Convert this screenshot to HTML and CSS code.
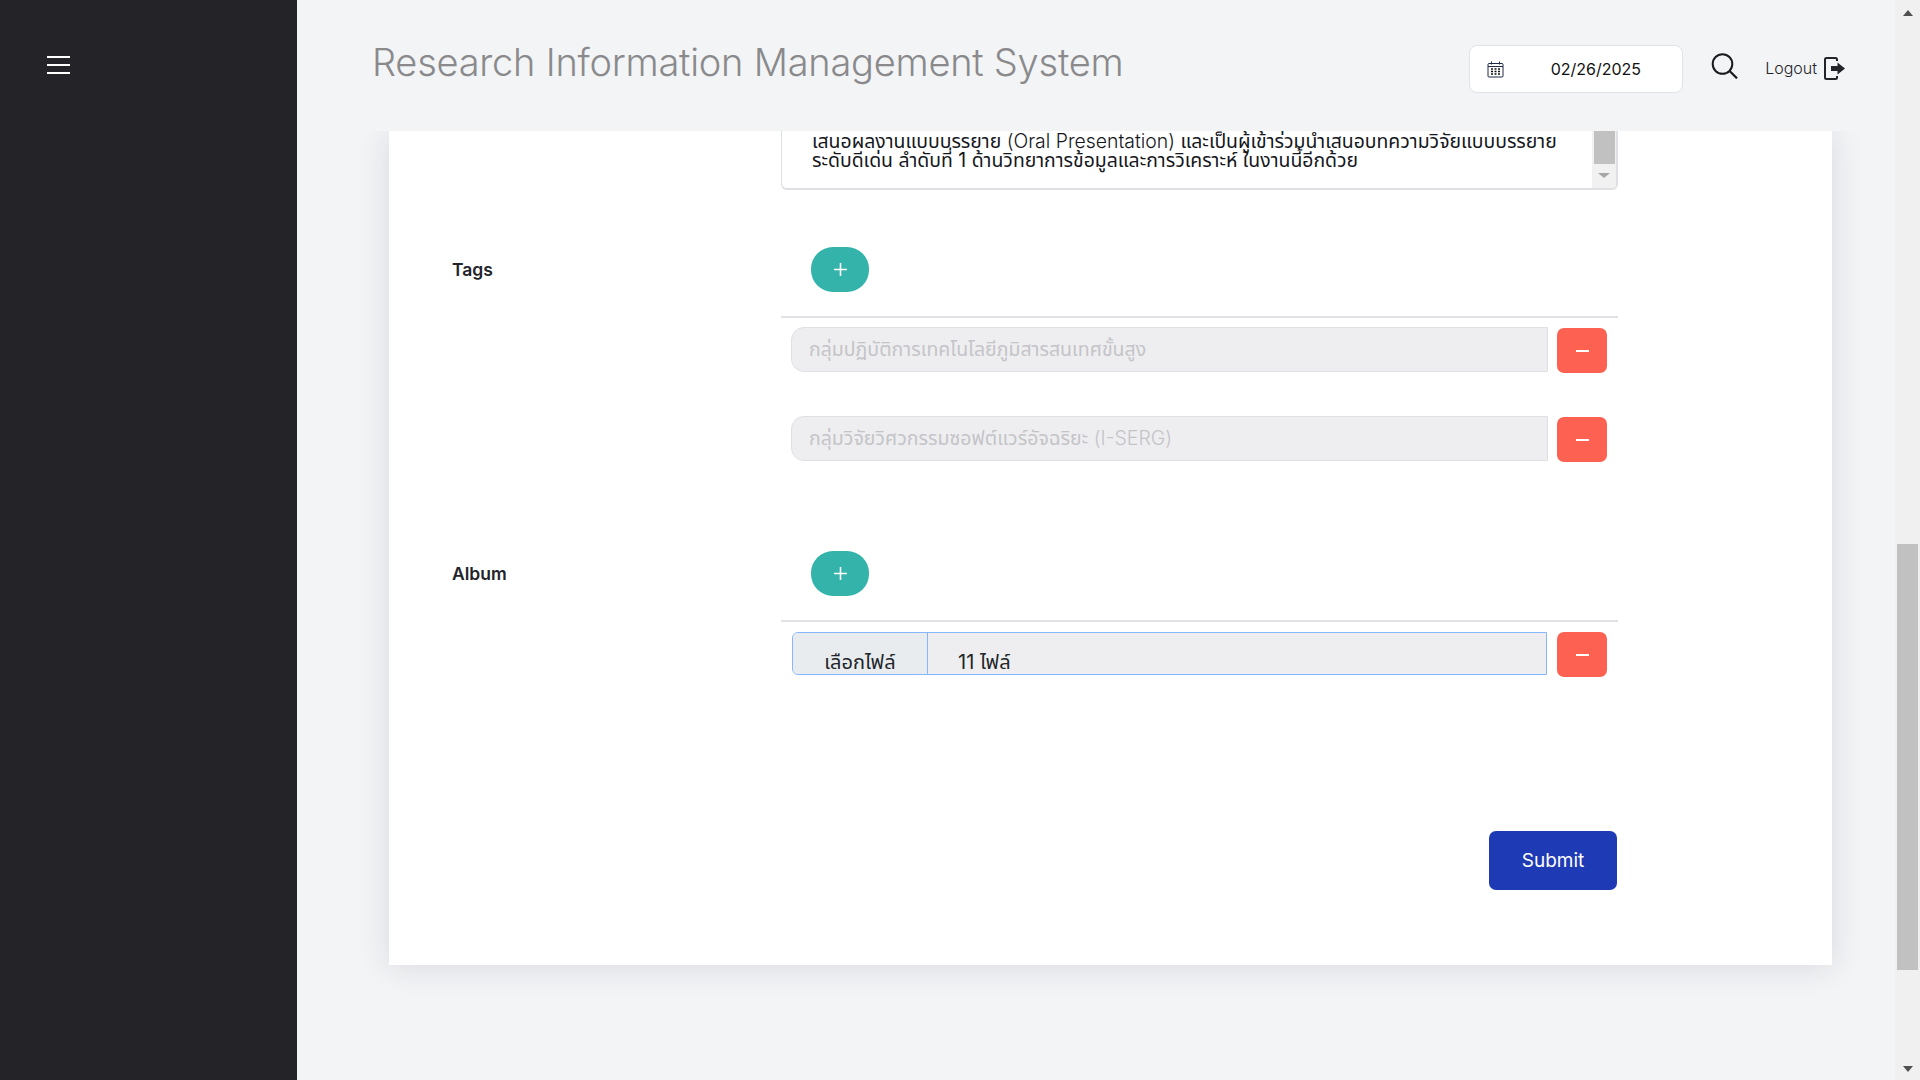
FILE: index.html
```html
<!DOCTYPE html>
<html lang="th">
<head>
<meta charset="utf-8">
<title>Research Information Management System</title>
<link rel="stylesheet" href="styles.css">
</head>
<body>
<div class="app">
  <aside class="sidebar">
    <svg class="burger" width="23" height="18" viewBox="0 0 23 18"><path d="M0 1h23M0 9h23M0 17h23" stroke="#fff" stroke-width="2" fill="none"/></svg>
  </aside>
  <div class="main">
    <header class="topbar">
      <h1 class="title">Research Information Management System</h1>
      <div class="tools">
        <div class="datebox">
          <svg class="cal" width="17" height="17" viewBox="0 0 17 17" fill="none"><rect x="1" y="2.5" width="15" height="13.5" rx="1" stroke="#1f2a44"/><path d="M1 5.5h15" stroke="#1f2a44"/><path d="M4.5 0.5v3M12.5 0.5v3" stroke="#1f2a44"/><path d="M4 8h2M7.5 8h2M11 8h2M4 10.5h2M7.5 10.5h2M11 10.5h2M4 13h2M7.5 13h2M11 13h2" stroke="#111" stroke-width="1.4"/></svg>
          <span class="datetext">02/26/2025</span>
        </div>
        <svg class="search" width="27" height="26" viewBox="0 0 27 26" fill="none"><circle cx="11.5" cy="11" r="9.8" stroke="#1a1a1f" stroke-width="2"/><path d="M18.6 18l7.4 7.4" stroke="#1a1a1f" stroke-width="2.2"/></svg>
        <div class="logout">
          <span>Logout</span>
          <svg width="21" height="23" viewBox="0 0 21 23" fill="none"><path d="M13 4V2.5a1.5 1.5 0 0 0-1.5-1.5H2.5A1.5 1.5 0 0 0 1 2.5v18A1.5 1.5 0 0 0 2.5 22h9a1.5 1.5 0 0 0 1.5-1.5V19" stroke="#22242a" stroke-width="2"/><path d="M7 9h6.5V5.5L21 11.5l-7.5 6V14H7z" fill="#22242a"/></svg>
        </div>
      </div>
    </header>
    <div class="content">
      <section class="card">
        <div class="row first">
          <div></div>
          <div class="textarea">
            <p class="tatext">เสนอผลงานแบบบรรยาย <span class="latin">(Oral Presentation)</span> และเป็นผู้เข้าร่วมนำเสนอบทความวิจัยแบบบรรยาย<br>ระดับดีเด่น ลำดับที่ 1 ด้านวิทยาการข้อมูลและการวิเคราะห์ ในงานนี้อีกด้วย</p>
            <div class="tascroll"><div class="tathumb"></div><div class="tri-down small"></div></div>
          </div>
        </div>

        <div class="row head tags">
          <div class="label">Tags</div>
          <div class="field"><button class="add"><svg width="13" height="13" viewBox="0 0 13 13"><path d="M6.5 0v13M0 6.5h13" stroke="#fff" stroke-width="1.6"/></svg></button></div>
        </div>
        <div class="row">
          <div></div>
          <div class="list">
            <div class="item"><div class="input">กลุ่มปฏิบัติการเทคโนโลยีภูมิสารสนเทศขั้นสูง</div><button class="del"><svg width="13" height="2" viewBox="0 0 13 2"><path d="M0 1h13" stroke="#fff" stroke-width="2"/></svg></button></div>
            <div class="item"><div class="input">กลุ่มวิจัยวิศวกรรมซอฟต์แวร์อัจฉริยะ <span class="latin">(I-SERG)</span></div><button class="del"><svg width="13" height="2" viewBox="0 0 13 2"><path d="M0 1h13" stroke="#fff" stroke-width="2"/></svg></button></div>
          </div>
        </div>

        <div class="row head album">
          <div class="label">Album</div>
          <div class="field"><button class="add"><svg width="13" height="13" viewBox="0 0 13 13"><path d="M6.5 0v13M0 6.5h13" stroke="#fff" stroke-width="1.6"/></svg></button></div>
        </div>
        <div class="row">
          <div></div>
          <div class="list">
            <div class="item file-item">
              <div class="file"><span class="file-btn">เลือกไฟล์</span><span class="file-name">11 ไฟล์</span></div>
              <button class="del"><svg width="13" height="2" viewBox="0 0 13 2"><path d="M0 1h13" stroke="#fff" stroke-width="2"/></svg></button>
            </div>
          </div>
        </div>
        <div class="actions"><button class="submit">Submit</button></div>
      </section>
    </div>
  </div>
  <div class="scrollbar">
    <div class="tri-up"></div>
    <div class="thumb"></div>
    <div class="tri-down"></div>
  </div>
</div>
</body>
</html>
```
FILE: styles.css
```css
* { box-sizing: border-box; }
html, body { margin: 0; height: 100%; overflow: hidden; }
body { font-family: Inter, "Noto Sans Thai", "Noto Sans", sans-serif; color: #212529; background: #f3f4f6; }
button { border: 0; padding: 0; font: inherit; display: flex; align-items: center; justify-content: center; }

.app { display: flex; height: 1080px; }
.sidebar { width: 297px; flex: none; background: #242428; padding: 56px 0 0 47px; }
.burger { display: block; }

.main { width: 1598px; flex: none; display: flex; flex-direction: column; }
.topbar { height: 131px; flex: none; display: flex; justify-content: space-between; padding: 37px 50px 0 75px; position: relative; z-index: 2; background: #f3f4f6; }
.title { margin: 0; font-size: 38px; font-weight: 300; line-height: 50px; color: #8a8a8c; letter-spacing: -0.24px; }
.tools { display: flex; align-items: flex-start; }
.datebox { width: 214px; height: 48px; margin-top: 8px; background: #fff; border: 1px solid #e2e3e6; border-radius: 8px; display: flex; align-items: center; padding-left: 17px; }
.cal { flex: none; }
.datetext { margin-left: 47px; font-size: 16px; color: #111; }
.search { margin: 16px 0 0 28px; flex: none; }
.logout { margin: 19px 0 0 27.5px; display: flex; align-items: center; gap: 7px; font-size: 16px; font-weight: 300; color: #23242a; height: 24px; }

.content { flex: 1; overflow: hidden; padding-left: 92px; }
.card { width: 1443px; height: 834px; background: #fff; box-shadow: 0 2px 30px rgba(20, 30, 50, .12); padding: 0 0 0 63px; }
.row { display: grid; grid-template-columns: 329px 837px; }
.first { height: 59px; }
.textarea { height: 59px; background: #fff; border: solid #dfe0e3; border-width: 0 2px 2px 1px; border-radius: 0 0 6px 6px; display: flex; justify-content: space-between; overflow: hidden; }
.tatext { margin: 0; padding: 1px 0 0 30px; font-size: 19.4px; line-height: 19px; font-weight: 400; white-space: nowrap; color: #15171c; }
.latin { font-weight: 300; }
.tascroll { width: 24px; flex: none; background: #f1f1f1; padding: 0 2px; display: flex; flex-direction: column; align-items: center; }
.tathumb { width: 21px; height: 33px; background: #c1c1c1; flex: none; }

.tags { margin-top: 57px; }
.album { margin-top: 89px; }
.label { font-size: 17.5px; font-weight: 600; color: #23242a; line-height: 45px; }
.field { height: 71px; padding-left: 30px; border-bottom: 2px solid #e0e1e5; }
.add { width: 58px; height: 45px; background: #34b3aa; border-radius: 22px; }

.list { display: flex; flex-direction: column; gap: 43px; padding: 9px 0 0 10px; }
.item { display: flex; gap: 9px; align-items: flex-start; }
.input { width: 757px; height: 45px; background: #eeeef0; border: 1px solid #dfe0e4; border-radius: 13px 0 0 13px; padding-left: 17px; font-size: 19.5px; font-weight: 400; line-height: 43px; color: #c4c4c8; white-space: nowrap; }
.del { width: 50px; height: 45px; margin-top: 1px; background: #fd6152; border-radius: 7px; }

.file-item { margin-top: 1px; }
.file { width: 755px; height: 43px; margin: 0 1px; background: #eeeef0; border: 1px solid #86b7fe; border-radius: 6px 0 0 6px; display: flex; overflow: hidden; font-size: 20px; font-weight: 400; color: #212529; }
.file-btn { width: 135px; flex: none; background: #e9ecef; border-right: 1px solid #86b7fe; text-align: center; line-height: 28px; padding-top: 15px; height: 60px; }
.file-name { padding-left: 30px; line-height: 28px; padding-top: 15px; height: 60px; }
.file-item .del { margin-top: 0; }

.actions { display: flex; justify-content: flex-end; width: 1165px; margin-top: 154px; }
.submit { width: 128px; height: 59px; background: #1e3ab4; color: #fff; font-size: 19px; font-weight: 400; border-radius: 7px; }

.scrollbar { width: 25px; flex: none; background: #f0f0f1; padding: 0 2px; display: flex; flex-direction: column; align-items: center; }
.tri-up { width: 0; height: 0; margin-top: 10px; border: solid transparent; border-width: 0 5.5px 6px; border-bottom-color: #505050; }
.thumb { width: 21px; height: 426px; margin-top: 528px; background: #c1c1c1; flex: none; }
.tri-down { width: 0; height: 0; margin-top: 96px; border: solid transparent; border-width: 6px 5.5px 0; border-top-color: #505050; }
.tri-down.small { margin-top: 9px; border-width: 5.5px 6px 0; border-top-color: #a6a6a6; }
```
